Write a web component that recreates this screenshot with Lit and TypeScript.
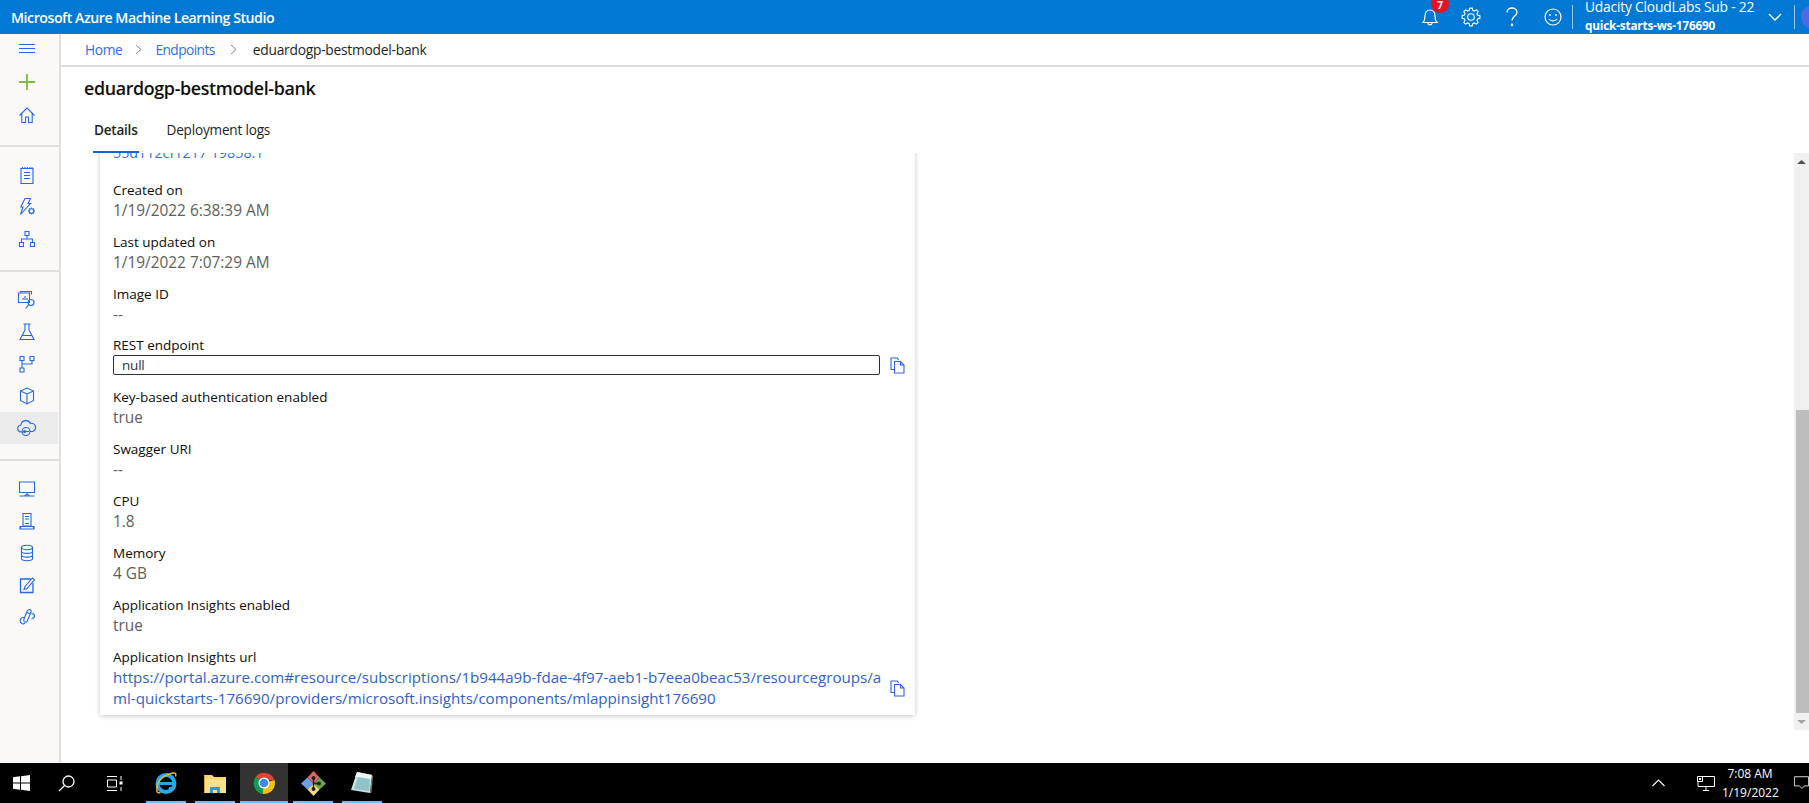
import { LitElement, html, css, svg } from "lit";
import { customElement } from "lit/decorators.js";

const blue = (inner: unknown, size = 20) => html`<svg class="ic" width=${size} height=${size} viewBox="0 0 20 20" fill="none" stroke="#2468e4" stroke-width="1.1">${inner}</svg>`;

const gear = (cx: number, cy: number, r1: number, r2: number, n: number) => {
  const pts: string[] = [];
  for (let i = 0; i < n; i++) {
    const a = (i / n) * Math.PI * 2;
    const w = (Math.PI / n) * 0.5;
    for (const [r, d] of [[r1, -w * 1.4], [r2, -w * 0.7], [r2, w * 0.7], [r1, w * 1.4]] as [number, number][]) {
      pts.push(`${(cx + r * Math.cos(a + d)).toFixed(2)} ${(cy + r * Math.sin(a + d)).toFixed(2)}`);
    }
  }
  return `M${pts.join("L")}Z`;
};

const icons = {
  home: svg`<path d="M2.500 10.500 10 3l7.500 7.500M4.800 8.500V17.500H8.500V12H11.500V17.500H15.200V8.500"/>`,
  notes: svg`<path d="M4 3.500h12v15H4zM5.500 2v2M8 2v2M10.500 2v2M13 2v2M15 2v2M7 7.500h6M7 10.500h6M7 13.500h6"/>`,
  flash: svg`<path d="M8 1.500h5.500l-2.500 5h2.500L3.500 17.500l2.500-7.500H3.800z"/><circle cx="14.500" cy="14" r="2.300"/><path d="M14.500 10.500v1.200M14.500 16.300v1.200M11 14h1.200M16.800 14H18M12 11.500l.8.8M16.200 15.700l.8.8M17 11.500l-.8.8M12.800 15.700l-.8.8"/>`,
  tree: svg`<path d="M8 2.500h4v4H8zM2.500 13.500h4v4h-4zM13.500 13.500h4v4h-4zM10 6.500V10M4.500 13.500V10h11v3.500"/>`,
  report: svg`<path d="M1.500 3h11v9.500h-11zM3.500 3V1.500h11v3M6 10V8M8 10V6M10 10V8"/><circle cx="14" cy="12.500" r="3"/><path d="m11.800 14.700-3.300 3.800"/>`,
  flask: svg`<path d="M6.500 2h7M8 2v6L3 17.500h14L12 8V2M5 13.500h10"/>`,
  pipe: svg`<path d="M3 2.500h4v4H3zM13 2.500h4v4h-4zM3 14h4v4H3zM5 6.500V14M15 6.500V10H5"/>`,
  cube: svg`<path d="M10 2 3.500 5v9.500L10 18l6.500-3.500V5zM3.500 5 10 8l6.500-3M10 8v10"/>`,
  cloud: svg`<path d="M5.500 14H4.500a3.500 3.500 0 0 1-.5-7A5 5 0 0 1 13.500 5.500 4 4 0 0 1 15.500 13.500H13"/><circle cx="9" cy="13.500" r="4"/><circle cx="7.500" cy="13.500" r="1.600" fill="#2468e4" stroke="none"/><path d="M7 13.500h5"/>`,
  monitor: svg`<path d="M2.500 3h15v10.500h-15zM10 13.500v2M7.500 17l2.500-2 2.500 2zM2.500 17h15"/>`,
  compute: svg`<path d="M6 2.500h8V15H6zM8 5.500h4M8 8h4M8 12.500h4M3 15.500h14v2.500H3zM4 15.500 3 18M16 15.500l1 2.500"/>`,
  data: svg`<ellipse cx="10" cy="4.500" rx="5.500" ry="2.200"/><path d="M4.500 4.500v11c0 1.200 2.500 2.200 5.500 2.200s5.500-1 5.500-2.200v-11M4.500 8.200c0 1.200 2.500 2.200 5.500 2.200s5.500-1 5.500-2.200M4.500 11.900c0 1.200 2.500 2.200 5.500 2.200s5.500-1 5.500-2.200"/>`,
  label: svg`<path d="M14 4H3.500v13.500H16V8" stroke-width="1.300"/><path d="M7 14.500l1-3L15.500 3l2 1.800L10 13.500z"/>`,
  link: svg`<path d="M12.500 2.500c1.500 0 2 1 1.500 2.500l-3.500 8.500c-.5 1.500-1.500 2-2.800 1.500-1.200-.5-1.200-1.500-.8-2.800l3.500-8.500c.5-1 1.200-1.200 2.600-1.200zM10 5.500l2.500 1M7 10.500a3.200 3.200 0 1 0-1 6.500 3.200 3.200 0 0 0 2-.8M14.500 6.500c2 0 3 1 3 2.500s-1.500 2.500-3 2.500"/>`,
};

const fields: [string, string][] = [
  ["Created on", "1/19/2022 6:38:39 AM"],
  ["Last updated on", "1/19/2022 7:07:29 AM"],
  ["Image ID", "--"],
];
const fields2: [string, string][] = [
  ["Key-based authentication enabled", "true"],
  ["Swagger URI", "--"],
  ["CPU", "1.8"],
  ["Memory", "4 GB"],
  ["Application Insights enabled", "true"],
];

const copy = html`<svg class="copy" width="15" height="17" viewBox="0 0 15 17" fill="none" stroke="#2f62e6" stroke-width="1.100"><path d="M4.500 12.500H1V1H7.500L8.500 3"/><path d="M4.500 4.500H10.500L14 8V16H4.500zM10.500 4.500V8H14"/></svg>`;

@customElement("app-root")
export class AppRoot extends LitElement {
  static styles = css`
    :host { display: flex; flex-direction: column; width: 1809px; height: 803px; overflow: hidden; font-family: "Open Sans", "Noto Sans", sans-serif; background: #fff; }
    .top { height: 34px; flex: none; background: #0078d4; color: #fff; display: flex; align-items: center; padding-left: 11px; overflow: hidden; }
    .brand { font-size: 14.200px; font-weight: 600; letter-spacing: -0.480px; flex: 1; }
    .tools { display: flex; align-items: center; height: 34px; }
    .tool { display: flex; justify-content: center; align-items: center; width: 41px; height: 34px; position: relative; }
    .badge { position: absolute; top: -5px; left: 22px; width: 18px; height: 18px; border-radius: 50%; background: #e81123; color: #fff; font-size: 10px; font-weight: 700; text-align: center; line-height: 20px; }
    .vsep { width: 1px; height: 24px; background: #9cc7ea; flex: none; }
    .vsep.first { margin-left: -1px; }
    .who { padding: 0 0 0 12px; width: 182px; box-sizing: border-box; line-height: 18px; white-space: nowrap; margin-top: -2px; }
    .sub { font-size: 13.800px; letter-spacing: -0.200px; }
    .ws { font-size: 11.800px; font-weight: 700; letter-spacing: -0.200px; }
    .chev { width: 39px; display: flex; justify-content: center; }
    .avatar { width: 8px; height: 34px; overflow: hidden; margin-left: 6px; display: flex; align-items: center; }
    .avatar i { display: block; width: 24px; height: 24px; flex: none; border-radius: 50%; background: #4f6ae0; }
    .main { flex: 1; display: flex; min-height: 0; }
    .side { width: 59px; flex: none; background: #faf9f8; border-right: 2px solid #e1dfdd; display: flex; flex-direction: column; }
    .si { height: 32px; display: flex; align-items: center; justify-content: center; flex: none; padding-right: 5px; }
    .si.h30 { height: 30px; }
    .si.h36 { height: 36px; }
    .si.sel { background: #ebebeb; margin-right: 1px; padding-right: 4px; }
    .spacer { height: 15px; }
    .group { padding: 12px 0 15px; border-bottom: 2px solid #e1dfdd; flex: none; }
    .group.first { padding: 0 0 15px; }
    .group.last { border: none; }
    .group.third { padding-bottom: 0; }
    .content { flex: 1; display: flex; flex-direction: column; min-width: 0; }
    .crumbs { height: 31px; flex: none; border-bottom: 2px solid #e1dfdd; display: flex; align-items: center; padding-left: 24px; font-size: 13.800px; letter-spacing: -0.400px; }
    .crumbs a { color: #2f6fe0; }
    .crumbs span { color: #201f1e; letter-spacing: -0.250px; }
    .crumbs a.end { letter-spacing: -0.600px; }
    .crumbs svg { margin: 0 13px; }
    .crumbs svg.second { margin: 0 16px 0 15px; }
    h1 { margin: 0; padding: 7px 0 0 23px; height: 36px; box-sizing: border-box; font-size: 17.850px; font-weight: 600; letter-spacing: -0.350px; color: #11100f; line-height: 28px; }
    .tabs { display: flex; height: 50px; flex: none; padding-left: 33px; align-items: flex-start; }
    .tab { font-size: 13.600px; letter-spacing: -0.200px; color: #201f1e; height: 50px; line-height: 54px; box-sizing: border-box; }
    .tab.on { font-weight: 600; letter-spacing: -0.250px; position: relative; margin-right: 29px; }
    .tab.on::after { content: ""; position: absolute; left: -1.500px; right: -1.500px; bottom: 0; height: 2px; background: #0f62d8; }
    .body { flex: 1; display: flex; min-height: 0; }
    .scroll { flex: 1; overflow: hidden; position: relative; padding-left: 39px; }
    .card { width: 815px; height: 605px; margin-top: -43px; background: #fff; box-shadow: 0 1px 5px rgba(0,0,0,.22); padding: 0 13px; box-sizing: border-box; }
    .clip { height: 61px; padding-top: 33px; box-sizing: border-box; font-size: 14.300px; color: #2f6fe0; line-height: 20px; }
    .f { height: 52px; box-sizing: border-box; padding-top: 9px; }
    .k { font-size: 13.500px; font-weight: 500; color: #0c0c0c; line-height: 20px; }
    .v { font-size: 15.400px; color: #605e5c; line-height: 22px; }
    .row { display: flex; align-items: center; gap: 10px; }
    .copy { flex: none; }
    .input { width: 767px; flex: none; height: 20px; box-sizing: border-box; border: 1.500px solid #323130; border-radius: 2px; padding-left: 8px; font-size: 13.500px; letter-spacing: -0.200px; color: #323130; line-height: 18px; }
    .f.rest { height: 51px; padding-top: 9px; }
    .f.rest .k { line-height: 19px; }
    .url { font-size: 15.120px; color: #2f62c8; line-height: 21px; width: 772px; flex: none; word-break: break-all; }
    .f.u .row { gap: 5px; }
    .bar { width: 15px; flex: none; margin-bottom: 33px; background: #f0f0f0; display: flex; flex-direction: column; align-items: flex-end; }
    .arr { height: 17px; width: 15px; display: flex; align-items: center; justify-content: center; flex: none; }
    .gap { flex: 1; }
    .thumb { width: 13px; height: 303px; background: #bdbdbd; flex: none; }
    .task { height: 40px; flex: none; background: #000; display: flex; align-items: stretch; color: #fff; overflow: hidden; }
    .t { display: flex; align-items: center; justify-content: center; flex: none; position: relative; }
    .t.run::after { content: ""; position: absolute; left: 0; right: 0; bottom: 0; height: 2px; background: #76b9ed; }
    .t.cur { background: #333; }
    .w42 { width: 42px; } .w48 { width: 48px; } .w40 { width: 40px; }
    .mr5 { margin-right: 5px; } .mr9 { margin-right: 9px; }
    .ie { margin-left: 8px; }
    .caret { width: 34px; margin-right: 21px; }
    .net { width: 20px; margin-right: 6px; }
    .note { width: 15px; margin-left: 16px; justify-content: flex-start; }
    .grow { flex: 1; }
    .clock { width: 56px; font-size: 12px; line-height: 19px; text-align: center; color: #fff; flex: none; align-self: center; white-space: nowrap; }
  `;

  render() {
    return html`
      <div class="top">
        <div class="brand">Microsoft Azure Machine Learning Studio</div>
        <div class="tools">
          <div class="tool">
            <svg width="18" height="20" viewBox="0 0 18 20" fill="none" stroke="#fff" stroke-width="1.200"><path d="M2 15.500h14c-1.500-1.500-2-2.500-2-6.500 0-3.500-2-6-5-6s-5 2.500-5 6c0 4-.5 5-2 6.500zM7 16c0 2.500 4 2.500 4 0"/></svg>
            <div class="badge">7</div>
          </div>
          <div class="tool">
            <svg width="20" height="20" viewBox="0 0 20 20" fill="none" stroke="#fff" stroke-width="1.100"><circle cx="10" cy="10" r="3.300"/><path d=${gear(10, 10, 6.800, 9, 8)}/></svg>
          </div>
          <div class="tool">
            <svg width="14" height="22" viewBox="0 0 14 22" fill="none" stroke="#fff" stroke-width="1.300"><path d="M2 6.500C2 3.500 4.200 2 7 2s5 1.700 5 4.300c0 4-5 4-5 8.200"/><circle cx="7" cy="18.800" r=".7" fill="#fff"/></svg>
          </div>
          <div class="tool">
            <svg width="20" height="20" viewBox="0 0 20 20" fill="none" stroke="#fff" stroke-width="1.200"><circle cx="10" cy="10" r="8"/><circle cx="7" cy="8" r=".9" fill="#fff" stroke="none"/><circle cx="13" cy="8" r=".9" fill="#fff" stroke="none"/><path d="M6 12c1.500 2.500 6.500 2.500 8 0"/></svg>
          </div>
          <div class="vsep first"></div>
          <div class="who"><div class="sub">Udacity CloudLabs Sub - 22</div><div class="ws">quick-starts-ws-176690</div></div>
          <div class="chev"><svg width="16" height="10" viewBox="0 0 16 10" fill="none" stroke="#fff" stroke-width="1.300"><path d="m2 2 6 6 6-6"/></svg></div>
          <div class="vsep"></div>
          <div class="avatar"><i></i></div>
        </div>
      </div>

      <div class="main">
        <div class="side">
          <div class="group first">
            <div class="si h30"><svg width="16" height="10" viewBox="0 0 16 10" stroke="#2468e4" stroke-width="1"><path d="M0 .5h16M0 4.500h16M0 8.500h16"/></svg></div>
            <div class="si h36"><svg width="16" height="16" viewBox="0 0 16 16" stroke="#7fba3c" stroke-width="1.800"><path d="M8 0v16M0 8h16"/></svg></div>
            <div class="si h30">${blue(icons.home)}</div>
          </div>
          <div class="group">
            <div class="si">${blue(icons.notes)}</div>
            <div class="si">${blue(icons.flash)}</div>
            <div class="si">${blue(icons.tree)}</div>
          </div>
          <div class="group third">
            <div class="si">${blue(icons.report)}</div>
            <div class="si">${blue(icons.flask)}</div>
            <div class="si">${blue(icons.pipe)}</div>
            <div class="si">${blue(icons.cube)}</div>
            <div class="si sel">${blue(icons.cloud)}</div>
            <div class="spacer"></div>
          </div>
          <div class="group last">
            <div class="si">${blue(icons.monitor)}</div>
            <div class="si">${blue(icons.compute)}</div>
            <div class="si">${blue(icons.data)}</div>
            <div class="si">${blue(icons.label)}</div>
            <div class="si">${blue(icons.link)}</div>
          </div>
        </div>

        <div class="content">
          <div class="crumbs">
            <a>Home</a>
            <svg width="7" height="11" viewBox="0 0 7 11" fill="none" stroke="#8a8886"><path d="m1 1 5 4.500-5 4.500"/></svg>
            <a class="end">Endpoints</a>
            <svg class="second" width="7" height="11" viewBox="0 0 7 11" fill="none" stroke="#8a8886"><path d="m1 1 5 4.500-5 4.500"/></svg>
            <span>eduardogp-bestmodel-bank</span>
          </div>
          <h1>eduardogp-bestmodel-bank</h1>
          <div class="tabs">
            <div class="tab on">Details</div>
            <div class="tab">Deployment logs</div>
          </div>
          <div class="body">
            <div class="scroll">
              <div class="card">
                <div class="clip">55d112cf1217 19858:1</div>
                ${fields.map(([k, v]) => html`<div class="f"><div class="k">${k}</div><div class="v">${v}</div></div>`)}
                <div class="f rest">
                  <div class="k">REST endpoint</div>
                  <div class="row"><div class="input">null</div>${copy}</div>
                </div>
                ${fields2.map(([k, v]) => html`<div class="f"><div class="k">${k}</div><div class="v">${v}</div></div>`)}
                <div class="f u">
                  <div class="k">Application Insights url</div>
                  <div class="row">
                    <div class="url">https://portal.azure.com#resource/subscriptions/1b944a9b-fdae-4f97-aeb1-b7eea0beac53/resourcegroups/aml-quickstarts-176690/providers/microsoft.insights/components/mlappinsight176690</div>
                    ${copy}
                  </div>
                </div>
              </div>
            </div>
            <div class="bar">
              <div class="arr"><svg width="9" height="6" viewBox="0 0 9 6"><path d="M4.500 1 9 5H0z" fill="#505050"/></svg></div>
              <div class="gap"></div>
              <div class="thumb"></div>
              <div class="arr"><svg width="9" height="6" viewBox="0 0 9 6"><path d="M4.500 5 9 1H0z" fill="#a3a3a3"/></svg></div>
            </div>
          </div>
        </div>
      </div>

      <div class="task">
        <div class="t w42"><svg width="17" height="16" viewBox="0 0 17 16" fill="#fff"><path d="M0 2.300 7 1.300V7.500H0zM8 1.200 17 0V7.500H8zM0 8.500h7v6.200L0 13.700zM8 8.500h9V16L8 14.800z"/></svg></div>
        <div class="t w48"><svg width="17" height="17" viewBox="0 0 17 17" fill="none" stroke="#fff" stroke-width="1.300"><circle cx="10.500" cy="6.500" r="5.500"/><path d="M6.500 10.500 1 16"/></svg></div>
        <div class="t w48"><svg width="17" height="15" viewBox="0 0 17 15" fill="none" stroke="#fff" stroke-width="1"><path d="M1 .5h10M1 14.500h10M1.500 4h9v7h-9zM15 0v4M15 11v4"/><rect x="13.500" y="5.500" width="3" height="3" fill="#fff" stroke="none"/></svg></div>
        <div class="t run w40 ie mr9">
          <svg width="24" height="24" viewBox="0 0 24 24"><circle cx="12" cy="12.500" r="8.500" fill="none" stroke="#2aa7e8" stroke-width="4"/><path d="M5 11h15v3H5z" fill="#2aa7e8"/><path d="M14 20c3 0 6-1 7-4h-6z" fill="#2aa7e8"/><path d="M3 18C2 12 8 4 19 2c2.500-.5 3.500 1 2.500 3.500" fill="none" stroke="#e5b93a" stroke-width="1.500"/><path d="M3 18c-1 3 1 4.500 3.500 3.500" fill="none" stroke="#e5b93a" stroke-width="1.500"/></svg>
        </div>
        <div class="t run w40 mr5">
          <svg width="22" height="19" viewBox="0 0 22 19"><path d="M0 1h8l2 2h12v3H0z" fill="#f6d773"/><path d="M0 5h22v14H0z" fill="#fbe08c"/><path d="M6 13h10v6h-3v-3H9v3H6z" fill="#1f9fe0"/><path d="M.5 1v18" stroke="#d9a93f" stroke-width="1"/></svg>
        </div>
        <div class="t run cur w48 mr5">
          <svg width="24" height="24" viewBox="0 0 24 24"><path d="M12 12 3.600 6A11 11 0 0 1 22.500 9H12z" fill="#db4437"/><path d="M12 12 22.500 9A11 11 0 0 1 10.500 23z" fill="#f4c20d"/><path d="M12 12 10.500 23A11 11 0 0 1 3.600 6z" fill="#0f9d58"/><circle cx="12" cy="12" r="5.500" fill="#fff"/><circle cx="12" cy="12" r="4.300" fill="#4285f4"/></svg>
        </div>
        <div class="t run w40 mr9">
          <svg width="25" height="25" viewBox="0 0 25 25"><path d="M12.500 12.500 6.500 6.500 0 12.500l6.500 6z" fill="#6d9eeb"/><path d="M12.500 12.500l6-6 6.500 6-6.500 6z" fill="#6aa84f"/><path d="M12.500 12.500l-6 6 6 6.500 6-6.500z" fill="#f1dc7e"/><path d="M12.500 12.500l-6-6L12.500 0l6 6.500z" fill="#e06666"/><circle cx="12.500" cy="7" r="2" fill="#222"/><circle cx="18" cy="12.500" r="2" fill="#222"/><circle cx="12.500" cy="18" r="2" fill="#222"/><path d="M12.500 7v11M12.500 12.500H18" stroke="#222" stroke-width="1.300"/></svg>
        </div>
        <div class="t run w40">
          <svg width="24" height="24" viewBox="0 0 24 24"><path d="M7 1 22 4 20 22 1 19z" fill="#c9e2e2"/><path d="M7 1 22 4 21 9 5 6z" fill="#eef4f2"/><path d="M8 6 20 8 19 20 4 18z" fill="#8fc3c7"/><path d="M20 22 22 4l1 1-1.500 17z" fill="#777"/></svg>
        </div>
        <div class="grow"></div>
        <div class="t caret"><svg width="13" height="8" viewBox="0 0 13 8" fill="none" stroke="#fff" stroke-width="1.100"><path d="m.5 7 6-6 6 6"/></svg></div>
        <div class="t net"><svg width="18" height="15" viewBox="0 0 18 15" fill="none" stroke="#fff" stroke-width="1"><path d="M5.500 .5h12v10H1V5.500M9 10.500v3.500M6 14.500h6M.5 .5h5v5h-5z"/><rect x="2" y="2" width="2" height="2" fill="#fff" stroke="none"/></svg></div>
        <div class="clock">7:08 AM<br />1/19/2022</div>
        <div class="t note"><svg width="18" height="16" viewBox="0 0 18 16" fill="none" stroke="#fff" stroke-width="1"><path d="M.5 .5h17v11h-5l-3 3-3-3h-6z"/></svg></div>
      </div>
    `;
  }
}
